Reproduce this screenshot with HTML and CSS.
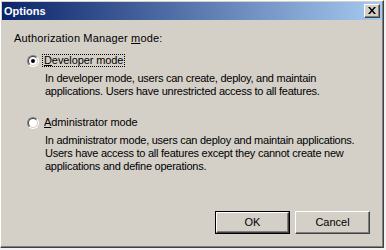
FILE: index.html
```html
<!DOCTYPE html>
<html>
<head>
<meta charset="utf-8">
<link rel="stylesheet" href="styles.css">
</head>
<body>
<div class="window">
  <div class="titlebar">
    <span class="title">Options</span>
    <span class="close"><svg width="8" height="7" viewBox="0 0 8 7"><path d="M0 0h2l2 2.5L6 0h2L5 3.5 8 7H6L4 4.5 2 7H0l3-3.5z" fill="#000"/></svg></span>
  </div>
  <div class="client">
    <div class="group-label">Authorization Manager <u>m</u>ode:</div>
    <div class="option first">
      <div class="radio-row">
        <span class="radio"><span class="radio-inner"><span class="dot"></span></span></span>
        <span class="radio-label focus"><u>D</u>eveloper mode</span>
      </div>
      <p class="desc">In developer mode, users can create, deploy, and maintain<br>applications. Users have unrestricted access to all features.</p>
    </div>
    <div class="option second">
      <div class="radio-row">
        <span class="radio"><span class="radio-inner"></span></span>
        <span class="radio-label"><u>A</u>dministrator mode</span>
      </div>
      <p class="desc">In administrator mode, users can deploy and maintain applications.<br>Users have access to all features except they cannot create new<br>applications and define operations.</p>
    </div>
    <div class="buttons">
      <span class="btn default"><span class="btn-face">OK</span></span>
      <span class="btn"><span class="btn-face">Cancel</span></span>
    </div>
  </div>
</div>
</body>
</html>
```

FILE: styles.css
```css
html, body {
  margin: 0;
  padding: 0;
  background: #f2f2f2;
}
body {
  font-family: "Liberation Sans", Arial, sans-serif;
  font-size: 11px;
  color: #000;
}
.window {
  width: 384px;
  height: 248px;
  box-sizing: border-box;
  background: #d4d0c8;
  border-style: solid;
  border-width: 1px;
  border-color: #ffffff #404040 #404040 #ffffff;
  box-shadow: inset -1px -1px 0 #808080;
  padding: 1px;
  display: flex;
  flex-direction: column;
}
.titlebar {
  height: 18px;
  flex: none;
  display: flex;
  align-items: flex-start;
  justify-content: space-between;
  background: linear-gradient(to right, #0a246a, #a6caf0);
}
.title {
  color: #fff;
  font-weight: bold;
  font-size: 11px;
  line-height: 18px;
  padding-left: 2px;
}
.close {
  width: 16px;
  height: 14px;
  box-sizing: border-box;
  margin: 2px 2px 0 0;
  background: #d4d0c8;
  border-style: solid;
  border-width: 1px;
  border-color: #ffffff #404040 #404040 #ffffff;
  box-shadow: inset -1px -1px 0 #808080;
  display: flex;
  align-items: center;
  justify-content: center;
  padding: 0 1px 1px 0;
}
.close svg { display: block; }
.client {
  flex: 1;
  display: flex;
  flex-direction: column;
  padding: 12px 12px 12px 12px;
}
.group-label {
  line-height: 13px;
  letter-spacing: 0.15px;
}
u { text-decoration: underline; text-underline-offset: 1px; }
.option.first { margin-top: 9px; }
.option.second { margin-top: 18px; }
.radio-row {
  display: flex;
  align-items: center;
  height: 13px;
  padding-left: 13px;
}
.radio {
  width: 12px;
  height: 12px;
  box-sizing: border-box;
  border-radius: 50%;
  border: 1px solid;
  border-color: #808080 #ffffff #ffffff #808080;
  display: flex;
}
.radio-inner {
  flex: 1;
  border-radius: 50%;
  border: 1px solid;
  border-color: #404040 #d4d0c8 #d4d0c8 #404040;
  background: #fff;
  display: flex;
  align-items: center;
  justify-content: center;
}
.dot {
  width: 4px;
  height: 4px;
  border-radius: 50%;
  background: #000;
}
.radio-label {
  margin-left: 3px;
  padding: 0 1px;
  line-height: 11px;
  border: 1px solid transparent;
  letter-spacing: -0.1px;
}
.radio-label.focus {
  border: 1px dotted #000;
}
.desc {
  margin: 5px 0 0 31px;
  line-height: 13px;
  white-space: nowrap;
  letter-spacing: -0.25px;
}
.buttons {
  margin-top: auto;
  display: flex;
  justify-content: flex-end;
  gap: 5px;
}
.btn {
  width: 75px;
  height: 23px;
  box-sizing: border-box;
  background: #d4d0c8;
  border-style: solid;
  border-width: 1px;
  border-color: #ffffff #404040 #404040 #ffffff;
  box-shadow: inset -1px -1px 0 #808080;
  display: flex;
}
.btn.default {
  border: 1px solid #000;
  box-shadow: none;
}
.btn.default .btn-face {
  border-style: solid;
  border-width: 1px;
  border-color: #ffffff #404040 #404040 #ffffff;
  box-shadow: inset -1px -1px 0 #808080;
}
.btn-face {
  flex: 1;
  display: flex;
  align-items: center;
  justify-content: center;
  line-height: 13px;
}
```
